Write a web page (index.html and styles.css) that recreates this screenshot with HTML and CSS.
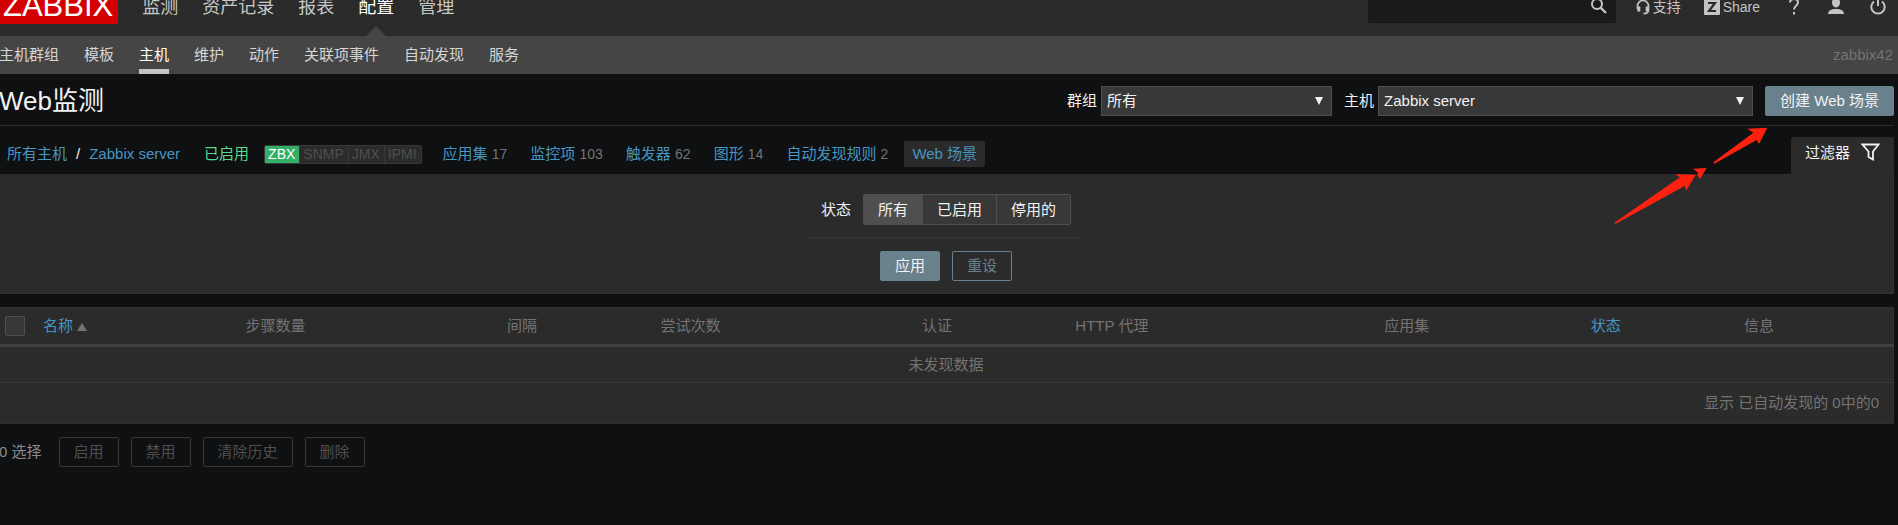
FILE: index.html
```html
<!DOCTYPE html>
<html lang="zh-CN">

<head>
  <meta charset="UTF-8">
  <title>Web监测</title>
  <link rel="stylesheet" href="styles.css">
</head>

<body>
  <header class="top-nav">
    <a class="logo" href="#">ZABBIX</a>
    <nav class="main-menu">
      <a href="#">监测</a>
      <a href="#">资产记录</a>
      <a href="#">报表</a>
      <a href="#" class="selected">配置</a>
      <a href="#">管理</a>
    </nav>
    <div class="top-right">
      <form class="search">
        <input type="text" aria-label="搜索">
        <button type="button" aria-label="搜索">
          <svg width="16" height="16" viewBox="0 0 16 16" fill="none" stroke="#c4c4c4" stroke-width="2">
            <circle cx="6" cy="6" r="5" />
            <path d="M9.6 9.6L15 15" stroke-width="2.4" />
          </svg>
        </button>
      </form>
      <a class="support" href="#">
        <svg width="14" height="16" viewBox="0 0 14 16" fill="none" stroke="#c4c4c4">
          <path d="M1.5 10V7a5.5 5.5 0 0 1 11 0v4q0 3.5-5 3.7" stroke-width="1.7" />
          <path d="M2.8 7.5v5M11.2 7.5v5" stroke-width="3" />
        </svg>
        <span>支持</span>
      </a>
      <a class="share" href="#">
        <svg width="16" height="16" viewBox="0 0 16 16">
          <rect width="16" height="16" rx="1" fill="#c4c4c4" />
          <path d="M4 4h7L5 12H12" fill="none" stroke="#2b2b2b" stroke-width="2.2" />
        </svg>
        <span>Share</span>
      </a>
      <a class="top-icon" href="#" aria-label="帮助">
        <svg width="16" height="18" viewBox="0 0 16 18" fill="none" stroke="#c4c4c4" stroke-width="2">
          <path d="M4 5.5Q4 2 8 2t4 3.5c0 3-4 3.5-4 7" />
          <path d="M8 15v2.5" />
        </svg>
      </a>
      <a class="top-icon" href="#" aria-label="用户">
        <svg width="16" height="18" viewBox="0 0 16 18" fill="#c4c4c4">
          <ellipse cx="8" cy="5.500" rx="4" ry="5" />
          <path d="M0 17q0-4 5.5-5h5Q16 13 16 17z" />
        </svg>
      </a>
      <a class="top-icon" href="#" aria-label="退出">
        <svg width="16" height="18" viewBox="0 0 16 18" fill="none" stroke="#c4c4c4" stroke-width="2">
          <path d="M4 4.5a6.7 6.7 0 1 0 8 0M8 1v8" />
        </svg>
      </a>
    </div>
  </header>

  <nav class="sub-nav">
    <a href="#">主机群组</a>
    <a href="#">模板</a>
    <a href="#" class="selected">主机</a>
    <a href="#">维护</a>
    <a href="#">动作</a>
    <a href="#">关联项事件</a>
    <a href="#">自动发现</a>
    <a href="#">服务</a>
    <span class="server-name">zabbix42</span>
  </nav>

  <main class="article">
    <div class="header-title">
      <h1>Web监测</h1>
      <form class="header-controls">
        <div class="field">
          <label for="groupid">群组</label>
          <span class="select-wrap group">
            <select id="groupid">
              <option>所有</option>
            </select>
          </span>
        </div>
        <div class="field">
          <label for="hostid">主机</label>
          <span class="select-wrap host">
            <select id="hostid">
              <option>Zabbix server</option>
            </select>
          </span>
        </div>
        <button type="button" class="btn">创建 Web 场景</button>
      </form>
    </div>

    <div class="host-bar">
      <div class="breadcrumbs">
        <a href="#">所有主机</a>
        <span>/</span>
        <a href="#">Zabbix server</a>
      </div>
      <a class="green" href="#">已启用</a>
      <div class="status-container">
        <span class="on">ZBX</span>
        <span>SNMP</span>
        <span>JMX</span>
        <span>IPMI</span>
      </div>
      <div class="object-links">
        <span><a href="#">应用集</a> <sup>17</sup></span>
        <span><a href="#">监控项</a> <sup>103</sup></span>
        <span><a href="#">触发器</a> <sup>62</sup></span>
        <span><a href="#">图形</a> <sup>14</sup></span>
        <span><a href="#">自动发现规则</a> <sup>2</sup></span>
      </div>
      <a class="current" href="#">Web 场景</a>
      <a class="filter-trigger" href="#">
        <span>过滤器</span>
        <svg width="19" height="18" viewBox="0 0 19 18" fill="none" stroke="#f2f2f2" stroke-width="1.8">
          <path d="M1.5 1.5h16L12 8.5V16.5L7.500 14V8.500z" />
        </svg>
      </a>
    </div>

    <form class="filter">
      <div class="filter-row">
        <span>状态</span>
        <div class="radio-segmented">
          <input type="radio" name="status" id="status-all" checked>
          <label for="status-all">所有</label>
          <input type="radio" name="status" id="status-on">
          <label for="status-on">已启用</label>
          <input type="radio" name="status" id="status-off">
          <label for="status-off">停用的</label>
        </div>
      </div>
      <div class="filter-buttons">
        <button type="button" class="btn">应用</button>
        <button type="button" class="btn btn-alt">重设</button>
      </div>
    </form>

    <table class="list-table">
      <colgroup>
        <col class="col-check">
        <col class="col-name">
        <col class="col-steps">
        <col class="col-short">
        <col class="col-steps">
        <col class="col-short">
        <col class="col-apps">
        <col class="col-status">
        <col class="col-short">
      </colgroup>
      <thead>
        <tr>
          <th><input type="checkbox" aria-label="全选"></th>
          <th><a href="#">名称<i class="arrow-up"></i></a></th>
          <th>步骤数量</th>
          <th>间隔</th>
          <th>尝试次数</th>
          <th>认证</th>
          <th>HTTP 代理</th>
          <th>应用集</th>
          <th><a href="#">状态</a></th>
          <th>信息</th>
        </tr>
      </thead>
      <tbody>
        <tr>
          <td class="nothing" colspan="10">未发现数据</td>
        </tr>
      </tbody>
      <tfoot>
        <tr>
          <td colspan="10">显示 已自动发现的 0中的0</td>
        </tr>
      </tfoot>
    </table>

    <div class="action-buttons">
      <span>0 选择</span>
      <button type="button" disabled>启用</button>
      <button type="button" disabled>禁用</button>
      <button type="button" disabled>清除历史</button>
      <button type="button" disabled>删除</button>
    </div>
  </main>

  <!-- 指向创建按钮的箭头 -->
  <svg class="arrows" width="160" height="100" viewBox="0 0 480 300" fill="#ff2010">
    <path d="M13 293L210 157 195 148 257 149 228 198 225 182 16 297z" />
    <path d="M249 131L290 129 270 162 262 151 264 143z" />
    <path d="M310 112L430 23 412 11 472 8 447 57 440 45 313 116z" />
  </svg>
</body>

</html>
```

FILE: styles.css
```css
* {
  box-sizing: border-box;
}

body {
  margin: 0 0 0 -1px;
  background-color: #0e1012;
  color: #f2f2f2;
  font-family: "Liberation Sans", "Noto Sans CJK SC", sans-serif;
  font-size: 15px;
  line-height: 20px;
}

a {
  color: #4796c4;
  text-decoration: none;
}

svg {
  display: block;
}

button,
input,
select {
  font: inherit;
  color: inherit;
}

/* 顶部菜单, 上边缘滚出窗口 */
.top-nav {
  display: flex;
  align-items: center;
  height: 60px;
  margin-top: -24px;
  background-color: #2b2b2b;
}

.logo {
  padding: 0 5px 0 4px;
  background-color: #d40000;
  color: #fff;
  font-size: 31px;
  line-height: 36px;
}

.main-menu {
  display: flex;
  gap: 24px;
  margin-left: 24px;
  font-size: 18px;
  line-height: 62px;
}

.main-menu a {
  height: 60px;
  color: #c8c8c8;
}

.main-menu .selected {
  position: relative;
  color: #fff;
}

.main-menu .selected::after {
  content: "";
  position: absolute;
  bottom: 0;
  left: 8px;
  border: 10px solid transparent;
  border-top-width: 0;
  border-bottom-color: #454545;
}

.top-right {
  display: flex;
  align-items: center;
  margin-left: auto;
  padding-right: 12px;
  font-size: 14px;
}

.top-right a {
  color: #c4c4c4;
}

.search {
  display: flex;
  align-items: center;
  width: 248px;
  height: 34px;
  padding-right: 8px;
  border: 1px solid #161616;
  background-color: #1a1a1a;
}

.search input {
  flex: 1;
  min-width: 0;
  border: 0;
  outline: 0;
  background: none;
}

.search button {
  padding: 0;
  border: 0;
  background: none;
}

.support,
.share {
  display: flex;
  align-items: center;
  gap: 3px;
  padding-top: 2px;
}

.support {
  margin-left: 20px;
}

.share {
  margin-left: 23px;
}

.top-icon {
  margin-left: 26px;
}

.sub-nav {
  display: flex;
  gap: 25px;
  padding-right: 5px;
  background-color: #454545;
  line-height: 38px;
}

.sub-nav a {
  height: 38px;
  color: #d6d6d6;
}

.sub-nav .selected {
  border-bottom: 5px solid #c4c4c4;
  color: #fff;
}

.server-name {
  margin-left: auto;
  color: #737373;
}

.article {
  padding-right: 4px;
}

.header-title {
  display: flex;
  align-items: center;
  justify-content: space-between;
  height: 52px;
  padding-top: 2px;
  border-bottom: 1px solid #2b2b2b;
}

h1 {
  margin: 0;
  font-size: 26px;
  font-weight: normal;
}

.header-controls {
  display: flex;
  gap: 12px;
}

.field {
  display: flex;
  align-items: center;
  gap: 4px;
}

.select-wrap {
  position: relative;
}

.select-wrap::after {
  content: "";
  position: absolute;
  top: 11px;
  right: 9px;
  border: 4px solid transparent;
  border-top: 8px solid #f2f2f2;
  border-bottom: 0;
  pointer-events: none;
}

.select-wrap select {
  display: block;
  width: 100%;
  height: 30px;
  padding: 0 5px;
  appearance: none;
  border: 1px solid #4f4f4f;
  border-radius: 0;
  background-color: #383838;
}

.group {
  width: 231px;
}

.host {
  width: 375px;
}

.btn {
  height: 30px;
  padding: 0 14px;
  border: 1px solid #69808d;
  border-radius: 2px;
  background-color: #69808d;
  color: #f2f2f2;
}

.btn-alt {
  background-color: transparent;
  color: #69808d;
}

.host-bar {
  display: flex;
  align-items: center;
  height: 48px;
  padding: 8px 0 0 8px;
}

.breadcrumbs {
  display: flex;
  gap: 9px;
}

.green {
  margin-left: 24px;
  color: #59db8f;
}

.status-container {
  display: flex;
  margin-left: 15px;
  border: 1px solid #383838;
  border-radius: 2px;
  background-color: #2b2b2b;
  color: #4f4f4f;
  font-size: 14px;
  line-height: 17px;
}

.status-container span {
  padding: 0 4px 0 3px;
}

.status-container span + span {
  border-left: 1px solid #383838;
}

.status-container .on {
  background-color: #34af67;
  color: #fff;
}

.object-links {
  display: flex;
  gap: 23px;
  margin-left: 21px;
}

.object-links sup {
  color: #737373;
  font-size: 14px;
  vertical-align: baseline;
}

.current {
  margin-left: 16px;
  padding: 3px 8px;
  border-radius: 2px;
  background-color: #2b2b2b;
}

.filter-trigger {
  display: flex;
  gap: 11px;
  align-self: flex-end;
  height: 37px;
  margin-left: auto;
  padding: 6px 14px;
  border-radius: 2px 2px 0 0;
  background-color: #2b2b2b;
  color: #f2f2f2;
}

.filter {
  display: flex;
  flex-direction: column;
  align-items: center;
  height: 120px;
  padding-top: 20px;
  border: solid #303030;
  border-width: 0 1px 1px 0;
  background-color: #2b2b2b;
}

.filter-row {
  display: flex;
  align-items: center;
  gap: 12px;
  padding: 0 11px 12px;
  border-bottom: 1px solid #383838;
}

.radio-segmented {
  display: flex;
  border: 1px solid #4f4f4f;
  border-radius: 2px;
  background-color: #383838;
}

.radio-segmented input {
  position: absolute;
  opacity: 0;
}

.radio-segmented label {
  padding: 0 14px;
  line-height: 29px;
}

.radio-segmented label + input + label {
  border-left: 1px solid #4f4f4f;
}

.radio-segmented input:checked + label {
  background-color: #4f4f4f;
}

.filter-buttons {
  display: flex;
  gap: 12px;
  margin-top: 13px;
}

.list-table {
  width: 100%;
  margin-top: 13px;
  table-layout: fixed;
  border-collapse: collapse;
  border: 1px solid #303030;
  border-left: 0;
  background-color: #2b2b2b;
  color: #737373;
}

.col-check {
  width: 2%;
}

.col-name {
  width: 10.7%;
}

.col-steps {
  width: 13.8%;
}

.col-short {
  width: 8.1%;
}

.col-apps {
  width: 16.3%;
}

.col-status {
  width: 10.9%;
}

th {
  height: 38px;
  padding: 0 6px;
  border-bottom: 3px solid #404040;
  font-weight: normal;
  text-align: left;
}

th input {
  display: block;
  width: 20px;
  height: 20px;
  margin: 0;
  appearance: none;
  border: 1px solid #4f4f4f;
  border-radius: 2px;
  background-color: #383838;
}

.arrow-up {
  display: inline-block;
  margin-left: 4px;
  border: 5px solid transparent;
  border-top: 0;
  border-bottom: 8px solid #737373;
}

td {
  height: 37px;
  padding: 0 14px;
}

.nothing {
  border-bottom: 1px solid #383838;
  text-align: center;
}

tfoot td {
  height: 41px;
  text-align: right;
}

.action-buttons {
  display: flex;
  align-items: center;
  gap: 12px;
  margin-top: 13px;
  color: #8c8c8c;
}

.action-buttons span {
  margin-right: 5px;
}

.action-buttons button {
  height: 30px;
  padding: 0 14px;
  border: 1px solid #383838;
  border-radius: 2px;
  background-color: transparent;
  color: #4f4f4f;
}

.arrows {
  position: absolute;
  top: 125px;
  right: 128px;
  pointer-events: none;
}
```
